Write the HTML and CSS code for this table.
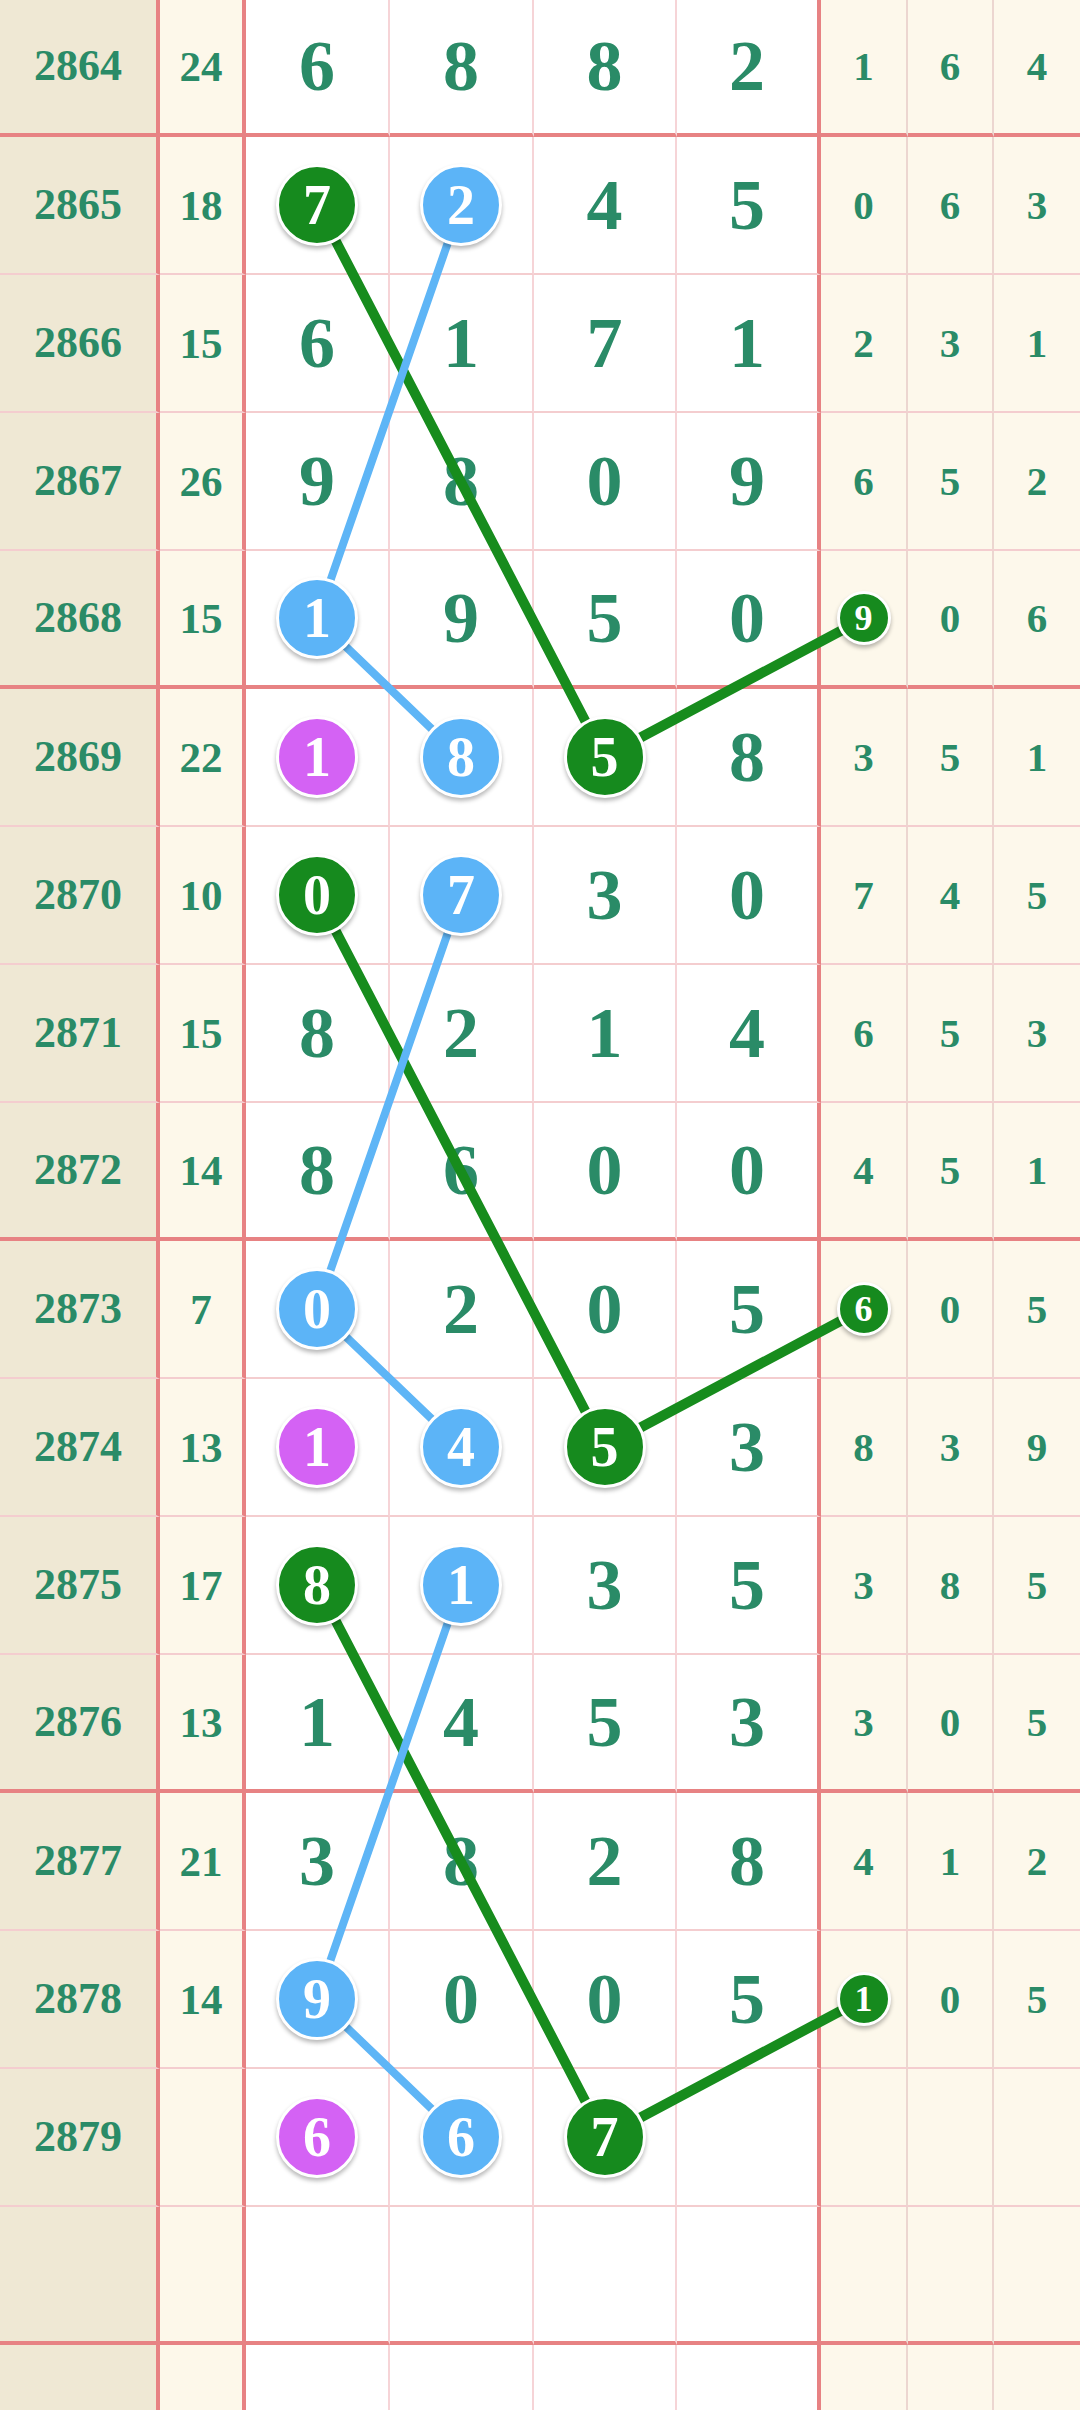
FILE: index.html
```html
<!DOCTYPE html>
<html lang="zh">
<head>
    <meta charset="UTF-8">
    <meta name="viewport" content="width=device-width, initial-scale=1.0">
    <title>走势图</title>
    <link rel="stylesheet" href="styles.css">
</head>
<body>
    <div class="chart">
        <div class="row sep">
            <div class="c no">2864</div><div class="c sum">24</div>
            <div class="c d">6</div><div class="c d">8</div><div class="c d">8</div><div class="c d d-end">2</div>
            <div class="c r">1</div><div class="c r">6</div><div class="c r r-end">4</div>
        </div>
        <div class="row">
            <div class="c no">2865</div><div class="c sum">18</div>
            <div class="c d"><span class="ball green">7</span></div><div class="c d"><span class="ball blue">2</span></div><div class="c d">4</div><div class="c d d-end">5</div>
            <div class="c r">0</div><div class="c r">6</div><div class="c r r-end">3</div>
        </div>
        <div class="row">
            <div class="c no">2866</div><div class="c sum">15</div>
            <div class="c d">6</div><div class="c d">1</div><div class="c d">7</div><div class="c d d-end">1</div>
            <div class="c r">2</div><div class="c r">3</div><div class="c r r-end">1</div>
        </div>
        <div class="row">
            <div class="c no">2867</div><div class="c sum">26</div>
            <div class="c d">9</div><div class="c d">8</div><div class="c d">0</div><div class="c d d-end">9</div>
            <div class="c r">6</div><div class="c r">5</div><div class="c r r-end">2</div>
        </div>
        <div class="row sep">
            <div class="c no">2868</div><div class="c sum">15</div>
            <div class="c d"><span class="ball blue">1</span></div><div class="c d">9</div><div class="c d">5</div><div class="c d d-end">0</div>
            <div class="c r"><span class="ball green small">9</span></div><div class="c r">0</div><div class="c r r-end">6</div>
        </div>
        <div class="row">
            <div class="c no">2869</div><div class="c sum">22</div>
            <div class="c d"><span class="ball purple">1</span></div><div class="c d"><span class="ball blue">8</span></div><div class="c d"><span class="ball green">5</span></div><div class="c d d-end">8</div>
            <div class="c r">3</div><div class="c r">5</div><div class="c r r-end">1</div>
        </div>
        <div class="row">
            <div class="c no">2870</div><div class="c sum">10</div>
            <div class="c d"><span class="ball green">0</span></div><div class="c d"><span class="ball blue">7</span></div><div class="c d">3</div><div class="c d d-end">0</div>
            <div class="c r">7</div><div class="c r">4</div><div class="c r r-end">5</div>
        </div>
        <div class="row">
            <div class="c no">2871</div><div class="c sum">15</div>
            <div class="c d">8</div><div class="c d">2</div><div class="c d">1</div><div class="c d d-end">4</div>
            <div class="c r">6</div><div class="c r">5</div><div class="c r r-end">3</div>
        </div>
        <div class="row sep">
            <div class="c no">2872</div><div class="c sum">14</div>
            <div class="c d">8</div><div class="c d">6</div><div class="c d">0</div><div class="c d d-end">0</div>
            <div class="c r">4</div><div class="c r">5</div><div class="c r r-end">1</div>
        </div>
        <div class="row">
            <div class="c no">2873</div><div class="c sum">7</div>
            <div class="c d"><span class="ball blue">0</span></div><div class="c d">2</div><div class="c d">0</div><div class="c d d-end">5</div>
            <div class="c r"><span class="ball green small">6</span></div><div class="c r">0</div><div class="c r r-end">5</div>
        </div>
        <div class="row">
            <div class="c no">2874</div><div class="c sum">13</div>
            <div class="c d"><span class="ball purple">1</span></div><div class="c d"><span class="ball blue">4</span></div><div class="c d"><span class="ball green">5</span></div><div class="c d d-end">3</div>
            <div class="c r">8</div><div class="c r">3</div><div class="c r r-end">9</div>
        </div>
        <div class="row">
            <div class="c no">2875</div><div class="c sum">17</div>
            <div class="c d"><span class="ball green">8</span></div><div class="c d"><span class="ball blue">1</span></div><div class="c d">3</div><div class="c d d-end">5</div>
            <div class="c r">3</div><div class="c r">8</div><div class="c r r-end">5</div>
        </div>
        <div class="row sep">
            <div class="c no">2876</div><div class="c sum">13</div>
            <div class="c d">1</div><div class="c d">4</div><div class="c d">5</div><div class="c d d-end">3</div>
            <div class="c r">3</div><div class="c r">0</div><div class="c r r-end">5</div>
        </div>
        <div class="row">
            <div class="c no">2877</div><div class="c sum">21</div>
            <div class="c d">3</div><div class="c d">8</div><div class="c d">2</div><div class="c d d-end">8</div>
            <div class="c r">4</div><div class="c r">1</div><div class="c r r-end">2</div>
        </div>
        <div class="row">
            <div class="c no">2878</div><div class="c sum">14</div>
            <div class="c d"><span class="ball blue">9</span></div><div class="c d">0</div><div class="c d">0</div><div class="c d d-end">5</div>
            <div class="c r"><span class="ball green small">1</span></div><div class="c r">0</div><div class="c r r-end">5</div>
        </div>
        <div class="row">
            <div class="c no">2879</div><div class="c sum"></div>
            <div class="c d"><span class="ball purple">6</span></div><div class="c d"><span class="ball blue">6</span></div><div class="c d"><span class="ball green">7</span></div><div class="c d d-end"></div>
            <div class="c r"></div><div class="c r"></div><div class="c r r-end"></div>
        </div>
        <div class="row sep">
            <div class="c no"></div><div class="c sum"></div>
            <div class="c d"></div><div class="c d"></div><div class="c d"></div><div class="c d d-end"></div>
            <div class="c r"></div><div class="c r"></div><div class="c r r-end"></div>
        </div>
        <div class="row">
            <div class="c no"></div><div class="c sum"></div>
            <div class="c d"></div><div class="c d"></div><div class="c d"></div><div class="c d d-end"></div>
            <div class="c r"></div><div class="c r"></div><div class="c r r-end"></div>
        </div>

        <!-- trend lines between the balls -->
        <svg class="lines" width="1080" height="2484" viewBox="0 0 1080 2484">
            <g fill="none" stroke-linejoin="round">
                <polyline points="317,206 604,758 863,620" stroke="#178c1d" stroke-width="10"/>
                <polyline points="461,206 317,620 461,758" stroke="#5eb5f6" stroke-width="8"/>
                <polyline points="317,896 604,1448 863,1310" stroke="#178c1d" stroke-width="10"/>
                <polyline points="461,896 317,1310 461,1448" stroke="#5eb5f6" stroke-width="8"/>
                <polyline points="317,1586 604,2138 863,2000" stroke="#178c1d" stroke-width="10"/>
                <polyline points="461,1586 317,2000 461,2138" stroke="#5eb5f6" stroke-width="8"/>
            </g>
        </svg>
    </div>
</body>
</html>
```

FILE: styles.css
```css
html, body {
    margin: 0;
    padding: 0;
    background: #ffffff;
    overflow: hidden;
}
.chart {
    position: relative;
    width: 1080px;
    margin-top: -1px;
    font-family: "Liberation Serif", "DejaVu Serif", serif;
    font-weight: bold;
    color: #2a8b67;
}
.row {
    display: grid;
    grid-template-columns: 160px 86px 144px 144px 143px 144px 87px 86px 86px;
    height: 138px;
}
.c {
    box-sizing: border-box;
    display: flex;
    align-items: center;
    justify-content: center;
    line-height: 1;
    border-bottom: 2px solid #f4cdcf;
}
.row.sep .c {
    border-bottom: 4px solid #e78283;
}
.no {
    background: #efe8d4;
    font-size: 44px;
    border-right: 4px solid #e78283;
}
.sum {
    background: #fdf8ea;
    font-size: 43px;
    border-right: 4px solid #e78283;
}
.d {
    background: #ffffff;
    font-size: 72px;
    border-right: 2px solid #f6d4d7;
}
.d-end {
    border-right: 4px solid #e78283;
}
.r {
    background: #fdf8eb;
    font-size: 41px;
    border-right: 2px solid #ecd6d0;
}
.r-end {
    border-right: none;
}
.ball {
    position: relative;
    z-index: 2;
    box-sizing: border-box;
    width: 82px;
    height: 82px;
    border-radius: 50%;
    border: 3px solid #ffffff;
    box-shadow: 0 3px 4px rgba(0, 0, 0, 0.28);
    display: flex;
    align-items: center;
    justify-content: center;
    color: #ffffff;
    font-size: 56px;
}
.ball.small {
    width: 54px;
    height: 54px;
    font-size: 36px;
}
.green {
    background: #168a1e;
}
.blue {
    background: #5cb4f7;
}
.purple {
    background: #d462f4;
}
.lines {
    position: absolute;
    top: 0;
    left: 0;
    z-index: 1;
    pointer-events: none;
}
```
